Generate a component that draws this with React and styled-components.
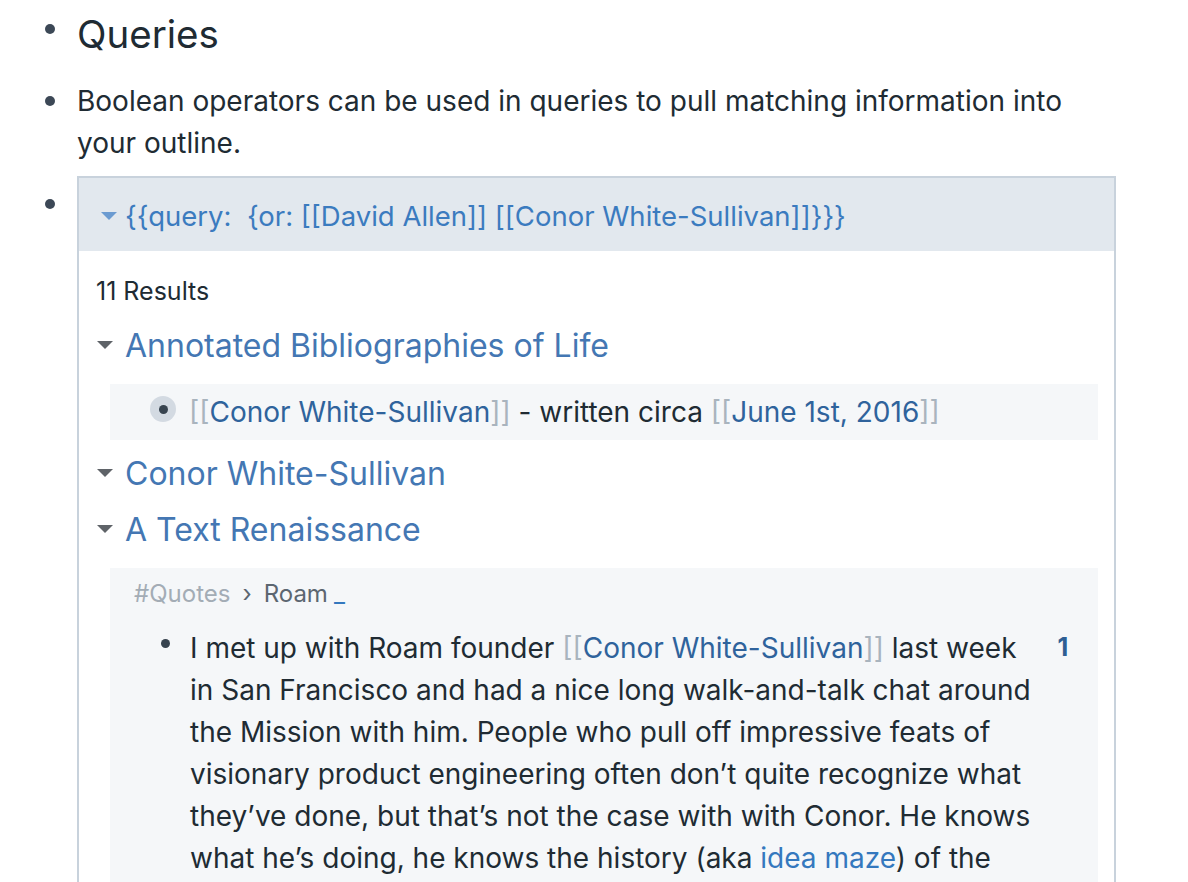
import styled, { createGlobalStyle } from "styled-components";

const GlobalStyle = createGlobalStyle`
  html, body { margin: 0; padding: 0; background: #fff; }
  body {
    font-family: Inter, "Noto Sans", "Liberation Sans", sans-serif;
    color: #202b33;
    -webkit-font-smoothing: antialiased;
  }
`;

const Page = styled.div`
  width: 1188px;
  height: 882px;
  overflow: hidden;
  padding: 0 72px 0 36px;
  box-sizing: border-box;
`;

const Row = styled.div`
  display: grid;
  grid-template-columns: 41px 1fr;
  margin-top: ${p => p.$mt || 0}px;
`;

const BulletCell = styled.div`
  padding-top: ${p => p.$top}px;
  padding-left: 9px;
`;

const Dot = styled.span`
  display: block;
  width: 10px;
  height: 10px;
  border-radius: 50%;
  background: #3c4856;
`;

const Heading = styled.div`
  font-size: 38.5px;
  line-height: 56px;
  font-weight: 400;
  color: #202b33;
  padding-top: 6px;
`;

const Text = styled.div`
  font-size: 28px;
  line-height: 42px;
  color: #202b33;
`;

const QueryBox = styled.div`
  border: 2px solid #c8d2dc;
  border-bottom: none;
  margin-top: 12px;
`;

const QueryHeader = styled.div`
  background: #e2e8ee;
  height: 73px;
  display: flex;
  align-items: center;
  padding: 2px 0 0 22px;
  box-sizing: border-box;
  gap: 8px;
  font-size: 27.5px;
  color: #3b7bbf;
  white-space: pre;
`;

const Caret = styled.span`
  width: 0;
  height: 0;
  border-left: ${p => p.$size}px solid transparent;
  border-right: ${p => p.$size}px solid transparent;
  border-top: ${p => p.$size}px solid ${p => p.$color};
  display: inline-block;
`;

const Results = styled.div`
  padding: 25px 16px 0 17px;
`;

const Count = styled.div`
  font-size: 25px;
  line-height: 30px;
  color: #202b33;
`;

const Group = styled.div`
  display: flex;
  align-items: center;
  gap: 12px;
  height: 56px;
  padding-left: 1px;
  font-size: 32px;
  color: #4477b3;
  margin-top: ${p => p.$mt || 0}px;
`;

const Block = styled.div`
  background: #f5f7f9;
  margin: ${p => p.$mt}px 0 ${p => p.$mb}px 14px;
  padding: ${p => p.$pad};
`;

const BlockRow = styled.div`
  display: flex;
  align-items: flex-start;
  margin-top: ${p => p.$mt || 0}px;
  padding-left: ${p => p.$pl || 0}px;
`;

const Halo = styled.span`
  flex: none;
  width: 26px;
  height: 26px;
  border-radius: 50%;
  background: ${p => (p.$halo ? "#d3dae2" : "transparent")};
  display: flex;
  align-items: center;
  justify-content: center;
  margin: ${p => p.$m};
  & > span {
    width: 9px;
    height: 9px;
    border-radius: 50%;
    background: #37434f;
  }
`;

const BlockText = styled.div`
  font-size: 28px;
  line-height: 42px;
  color: #202b33;
  flex: 1;
`;

const Bracket = styled.span`
  color: #a9b4be;
`;

const PageRef = styled.span`
  color: #2f639c;
`;

const Link = styled.span`
  color: #3478be;
`;

const Crumbs = styled.div`
  font-size: 24px;
  line-height: 30px;
  display: flex;
  align-items: center;
  gap: 12px;
  margin-left: 24px;
  color: #5c6670;
`;

const CrumbTag = styled.span`
  color: #a3acb5;
`;

const Underscore = styled.span`
  color: #3478be;
  margin-left: -6px;
`;

const RefCount = styled.span`
  flex: none;
  width: 40px;
  margin-right: 15px;
  text-align: center;
  font-size: 25px;
  font-weight: 700;
  color: #2e5e93;
  line-height: 40px;
`;

function Ref({ children }) {
  return (
    <>
      <Bracket>[[</Bracket>
      <PageRef>{children}</PageRef>
      <Bracket>]]</Bracket>
    </>
  );
}

export default function App() {
  return (
    <Page>
      <GlobalStyle />
      <Row>
        <BulletCell $top={24}><Dot /></BulletCell>
        <Heading>Queries</Heading>
      </Row>

      <Row $mt={18}>
        <BulletCell $top={16}><Dot /></BulletCell>
        <Text>
          Boolean operators can be used in queries to pull matching information into your outline.
        </Text>
      </Row>

      <Row>
        <BulletCell $top={35}><Dot /></BulletCell>
        <QueryBox>
          <QueryHeader>
            <Caret $size={8} $color="#6b9bd1" />
            {"{{query:  {or: [[David Allen]] [[Conor White-Sullivan]]}}}"}
          </QueryHeader>
          <Results>
            <Count>11 Results</Count>
            <Group $mt={11}>
              <Caret $size={8.5} $color="#5f6368" />
              Annotated Bibliographies of Life
            </Group>
            <Block $mt={11} $mb={5} $pad="7px 0 7px 40px">
              <BlockRow>
                <Halo $halo $m="5px 13px 0 0"><span /></Halo>
                <BlockText>
                  <Ref>Conor White-Sullivan</Ref> - written circa <Ref>June 1st, 2016</Ref>
                </BlockText>
              </BlockRow>
            </Block>
            <Group>
              <Caret $size={8.5} $color="#5f6368" />
              Conor White-Sullivan
            </Group>
            <Group>
              <Caret $size={8.5} $color="#5f6368" />
              A Text Renaissance
            </Group>
            <Block $mt={11} $mb={0} $pad="11px 0 40px 0">
              <Crumbs>
                <CrumbTag>#Quotes</CrumbTag>
                <span>›</span>
                <span>Roam</span>
                <Underscore>_</Underscore>
              </Crumbs>
              <BlockRow $mt={18} $pl={40}>
                <Halo $m="3px 12px 0 2px"><span /></Halo>
                <BlockText>
                  I met up with Roam founder <Ref>Conor White-Sullivan</Ref> last week in San
                  Francisco and had a nice long walk-and-talk chat around the Mission with him.
                  People who pull off impressive feats of visionary product engineering often
                  don’t quite recognize what they’ve done, but that’s not the case with with
                  Conor. He knows what he’s doing, he knows the history (aka <Link>idea maze</Link>) of
                  the problem he’s solving, and he has a clear vision of where he wants to go.
                </BlockText>
                <RefCount>1</RefCount>
              </BlockRow>
            </Block>
          </Results>
        </QueryBox>
      </Row>
    </Page>
  );
}
